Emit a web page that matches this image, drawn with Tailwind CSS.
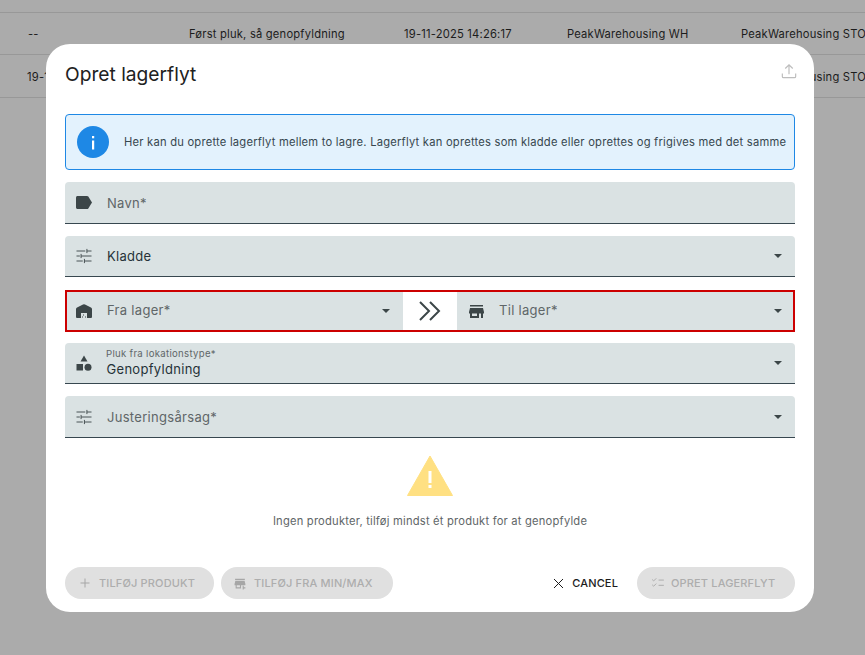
<!DOCTYPE html>
<html lang="da">
<head>
<meta charset="utf-8">
<script src="https://cdn.jsdelivr.net/npm/@tailwindcss/browser@4"></script>
</head>
<body class="relative w-[865px] h-[655px] overflow-hidden bg-[#ababab] font-['Inter',sans-serif]">
  <!-- background table -->
  <div class="pt-[12px] text-[11.2px] tracking-[0.2px] text-[#1c1c1c]">
    <div class="h-[43px] flex items-center pt-[2px] border-y border-[#989898] whitespace-nowrap">
      <span class="ml-[28px] w-[161px] shrink-0">--</span>
      <span class="w-[215px] shrink-0">Først pluk, så genopfyldning</span>
      <span class="w-[163px] shrink-0">19-11-2025 14:26:17</span>
      <span class="w-[174px] shrink-0">PeakWarehousing WH</span>
      <span class="shrink-0">PeakWarehousing STOCK</span>
    </div>
    <div class="h-[43px] flex items-center pt-[2px] border-b border-[#989898] whitespace-nowrap">
      <span class="ml-[27px] w-[714px] shrink-0">19-11-2025</span>
      <span class="shrink-0">PeakWarehousing STOCK</span>
    </div>
  </div>

  <!-- modal -->
  <div class="absolute left-[46px] top-[44px] w-[768px] h-[568px] bg-white rounded-[24px] px-[19px] flex flex-col">
    <div class="h-[70px] flex items-start justify-between shrink-0">
      <h2 class="mt-[17px] text-[19.2px] leading-[26px] text-[#212121]">Opret lagerflyt</h2>
      <svg class="mt-[17px] -mr-[4px] w-[20px] h-[20px]" viewBox="0 0 24 24" fill="none" stroke="#bdbdbd" stroke-width="1.400"><path d="M4 15v3.500c0 .9.7 1.500 1.500 1.500h13c.8 0 1.500-.6 1.500-1.500V15M12 16V4.500M7.500 9L12 4.500 16.500 9"/></svg>
    </div>

    <div class="h-[56px] shrink-0 flex items-center border border-[#1e88e5] bg-[#e3f2fd] rounded-[4px] pl-[11px]">
      <svg class="w-[32px] h-[32px] shrink-0" viewBox="0 0 32 32"><circle cx="16" cy="16" r="16" fill="#1e88e5"/><rect x="15" y="14.500" width="2.200" height="9" fill="#fff"/><rect x="15" y="10" width="2.200" height="2.300" fill="#fff"/></svg>
      <span class="ml-[15px] pt-[1px] text-[11.2px] tracking-[0.22px] text-[#37474f] whitespace-nowrap">Her kan du oprette lagerflyt mellem to lagre. Lagerflyt kan oprettes som kladde eller oprettes og frigives med det samme</span>
    </div>

    <!-- Navn -->
    <div class="mt-[12px] h-[42px] shrink-0 flex items-center bg-[#dae2e3] rounded-t-[4px] border-b border-[#37474f] pl-[11px]">
      <svg class="w-[16px] h-[13px] shrink-0" viewBox="0 0 16 13" fill="#3c4648"><path d="M1.500 0H11c.5 0 1 .2 1.300.6L16 6.500l-3.700 5.900c-.3.4-.8.6-1.300.6H1.500C.7 13 0 12.300 0 11.500v-10C0 .7.7 0 1.500 0z"/></svg>
      <span class="ml-[15px] pt-[2px] text-[13px] text-[#5f6668] tracking-[0.3px]">Navn*</span>
    </div>

    <!-- Kladde -->
    <div class="mt-[12px] h-[41px] shrink-0 flex items-center bg-[#dae2e3] rounded-t-[4px] border-b border-[#37474f] pl-[9px] pr-[13px]">
      <svg class="w-[20px] h-[20px] shrink-0" viewBox="0 0 24 24" fill="none" stroke="#3c4648" stroke-width="1.100"><path d="M3 6h10.500M15.500 3.500v5M15.500 6H21M3 12h4M8.500 9.500v5M8.500 12H21M3 18h7.500M12.500 15.500v5M12.500 18H21"/></svg>
      <span class="ml-[13px] pt-[1px] text-[13px] text-[#263238] tracking-[0.3px] grow">Kladde</span>
      <svg class="w-[8px] h-[4px]" viewBox="0 0 10 5" fill="#3c4648"><path d="M0 0h10L5 5z"/></svg>
    </div>

    <!-- Fra / Til -->
    <div class="mt-[13px] h-[42px] shrink-0 flex border-2 border-[#cc0000]">
      <div class="w-[336px] flex items-center bg-[#dae2e3] pl-[9px] pr-[13px]">
        <svg class="w-[16px] h-[14px] shrink-0" viewBox="0 0 16 14" fill="#3c4648"><path d="M1 3.500L7 .5q1-.5 2 0L15 3.500q1 .5 1 1.500V13q0 1-1 1H11V9H5V14H1q-1 0-1-1V5q0-1 1-1.500z"/><rect x="7" y="10.500" width="1" height="1"/><rect x="6" y="12.500" width="1" height="1"/><rect x="9" y="12.500" width="1" height="1"/></svg>
        <span class="ml-[15px] text-[13px] text-[#5f6668] tracking-[0.3px] grow">Fra lager*</span>
        <svg class="w-[8px] h-[4px]" viewBox="0 0 10 5" fill="#3c4648"><path d="M0 0h10L5 5z"/></svg>
      </div>
      <div class="w-[54px] flex items-center justify-center bg-white">
        <svg class="w-[24px] h-[20px]" viewBox="0 0 24 20" fill="none" stroke="#3c4648" stroke-width="2"><path d="M2 1l9 9-9 9M12 1l9 9-9 9"/></svg>
      </div>
      <div class="grow flex items-center bg-[#dae2e3] pl-[12px] pr-[11px]">
        <svg class="w-[15px] h-[13px] shrink-0" viewBox="0 0 15 13" fill="#3c4648"><path d="M1 0h13v1.500H1zM1 3h13l1 4v1.500H0V7zM1 8.500h9V13H1zM3 8.500h5V11H3zM12 8.500h2V13h-2z" fill-rule="evenodd"/></svg>
        <span class="ml-[15px] text-[13px] text-[#5f6668] tracking-[0.3px] grow">Til lager*</span>
        <svg class="w-[8px] h-[4px]" viewBox="0 0 10 5" fill="#3c4648"><path d="M0 0h10L5 5z"/></svg>
      </div>
    </div>

    <!-- Pluk -->
    <div class="mt-[11px] h-[41px] shrink-0 flex items-center bg-[#dae2e3] rounded-t-[4px] border-b border-[#37474f] pl-[10px] pr-[13px]">
      <svg class="w-[18px] h-[18px] shrink-0" viewBox="0 0 18 18" fill="#3c4648"><path d="M9 1.500l3.500 6h-7z"/><rect x="1.500" y="10" width="6.500" height="6.500"/><circle cx="13" cy="13.200" r="3.500"/></svg>
      <div class="ml-[13px] grow -mt-[1px]">
        <div class="text-[9.6px] leading-[12px] text-[#5f6668] tracking-[0.3px]">Pluk fra lokationstype*</div>
        <div class="mt-[1px] text-[13px] leading-[16px] text-[#263238] tracking-[0.3px] translate-x-[0.5px]">Genopfyldning</div>
      </div>
      <svg class="w-[8px] h-[4px]" viewBox="0 0 10 5" fill="#3c4648"><path d="M0 0h10L5 5z"/></svg>
    </div>

    <!-- Justering -->
    <div class="mt-[12px] h-[42px] shrink-0 flex items-center bg-[#dae2e3] rounded-t-[4px] border-b border-[#37474f] pl-[9px] pr-[13px]">
      <svg class="w-[20px] h-[20px] shrink-0" viewBox="0 0 24 24" fill="none" stroke="#3c4648" stroke-width="1.100"><path d="M3 6h10.500M15.500 3.500v5M15.500 6H21M3 12h4M8.500 9.500v5M8.500 12H21M3 18h7.500M12.500 15.500v5M12.500 18H21"/></svg>
      <span class="ml-[13px] pt-[2px] text-[13px] text-[#5f6668] tracking-[0.3px] grow">Justeringsårsag*</span>
      <svg class="w-[8px] h-[4px]" viewBox="0 0 10 5" fill="#3c4648"><path d="M0 0h10L5 5z"/></svg>
    </div>

    <!-- Empty state -->
    <div class="mt-[17px] flex flex-col items-center shrink-0">
      <svg class="w-[46px] h-[41px]" viewBox="0 0 46 41"><path d="M23 1L45.500 40.500H.5z" fill="#ffe082" stroke="#ffe082" stroke-linejoin="round"/><rect x="21.500" y="16" width="3" height="12" fill="#fff"/><rect x="21.500" y="30" width="3" height="3" fill="#fff"/></svg>
      <p class="mt-[18px] text-[11.2px] tracking-[0.2px] leading-[14px] text-[#5f6668]">Ingen produkter, tilføj mindst ét produkt for at genopfylde</p>
    </div>

    <!-- Footer -->
    <div class="mt-[39px] flex items-center shrink-0 text-[11px] font-medium tracking-[0.15px]">
      <div class="h-[32px] w-[149px] rounded-full bg-[#e0e0e0] flex items-center pl-[14px] text-[#adadad]">
        <svg class="w-[12px] h-[12px]" viewBox="0 0 12 12" stroke="#a6a6a6" stroke-width="1"><path d="M6 1.500v9M1.500 6h9"/></svg>
        <span class="ml-[8px]">TILFØJ PRODUKT</span>
      </div>
      <div class="ml-[7px] h-[32px] w-[172px] rounded-full bg-[#e0e0e0] flex items-center pl-[13px] text-[#adadad]">
        <svg class="w-[13px] h-[13px]" viewBox="0 0 24 24" fill="#a6a6a6"><path d="M2 3h18v2.500H2zM2.500 7h17l1.500 6v2H1v-2zM3 15h10v6H3zM5 15h6v4H5zM16 16h2v3h3v2h-3v2h-2z" fill-rule="evenodd"/></svg>
        <span class="ml-[7px]">TILFØJ FRA MIN/MAX</span>
      </div>
      <div class="ml-auto flex items-center text-[#1c1c1c]">
        <svg class="w-[11px] h-[11px]" viewBox="0 0 11 11" stroke="#1c1c1c" stroke-width="1"><path d="M1 1l9 9M10 1l-9 9"/></svg>
        <span class="ml-[8px]">CANCEL</span>
      </div>
      <div class="ml-[19px] h-[32px] w-[158px] rounded-full bg-[#e0e0e0] flex items-center pl-[14px] text-[#adadad]">
        <svg class="w-[14px] h-[14px]" viewBox="0 0 24 24" fill="none" stroke="#a6a6a6" stroke-width="1.500"><path d="M2 6l2.500 2.500L9 4M2 15l2.500 2.500L9 13M13 7h9M13 16h9"/></svg>
        <span class="ml-[6px]">OPRET LAGERFLYT</span>
      </div>
    </div>
  </div>
</body>
</html>
